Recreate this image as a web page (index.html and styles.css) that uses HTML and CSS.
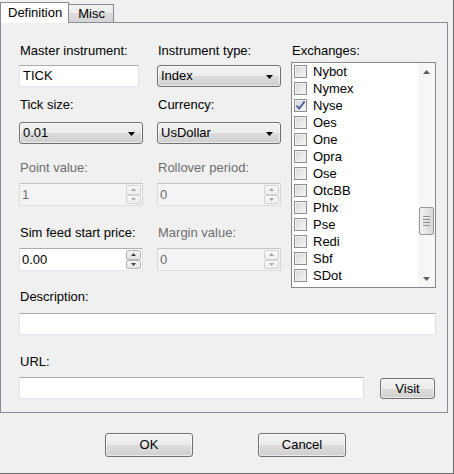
FILE: index.html
```html
<!DOCTYPE html>
<html>
<head>
<meta charset="utf-8">
<link rel="stylesheet" href="styles.css">
</head>
<body>
<div class="window">
  <div class="tabs">
    <div class="tab active">Definition</div>
    <div class="tab">Misc</div>
  </div>
  <div class="panel">
    <div class="top">
      <div class="col c1">
        <div class="lbl">Master instrument:</div>
        <div class="textbox tick">TICK</div>
        <div class="lbl mt10">Tick size:</div>
        <div class="combo mt10"><span>0.01</span><svg class="carrow" width="7" height="4" viewBox="0 0 7 4"><polygon points="0,0 7,0 3.5,4" fill="#000"/></svg></div>
        <div class="lbl dis mt16">Point value:</div>
        <div class="spin disabled mt8"><span class="val">1</span><div class="spinbtns"><div class="sb"><svg width="5" height="3" viewBox="0 0 5 3"><polygon points="0,3 5,3 2.5,0" fill="#a8a8a8"/></svg></div><div class="sb"><svg width="5" height="3" viewBox="0 0 5 3"><polygon points="0,0 5,0 2.5,3" fill="#a8a8a8"/></svg></div></div></div>
        <div class="lbl mt19">Sim feed start price:</div>
        <div class="spin mt8"><span class="val">0.00</span><div class="spinbtns"><div class="sb"><svg width="5" height="3" viewBox="0 0 5 3"><polygon points="0,3 5,3 2.5,0" fill="#3d3d3d"/></svg></div><div class="sb"><svg width="5" height="3" viewBox="0 0 5 3"><polygon points="0,0 5,0 2.5,3" fill="#3d3d3d"/></svg></div></div></div>
      </div>
      <div class="col c2">
        <div class="lbl">Instrument type:</div>
        <div class="combo mt7"><span>Index</span><svg class="carrow" width="7" height="4" viewBox="0 0 7 4"><polygon points="0,0 7,0 3.5,4" fill="#000"/></svg></div>
        <div class="lbl mt10">Currency:</div>
        <div class="combo mt10"><span>UsDollar</span><svg class="carrow" width="7" height="4" viewBox="0 0 7 4"><polygon points="0,0 7,0 3.5,4" fill="#000"/></svg></div>
        <div class="lbl dis mt16">Rollover period:</div>
        <div class="spin disabled mt8"><span class="val">0</span><div class="spinbtns"><div class="sb"><svg width="5" height="3" viewBox="0 0 5 3"><polygon points="0,3 5,3 2.5,0" fill="#a8a8a8"/></svg></div><div class="sb"><svg width="5" height="3" viewBox="0 0 5 3"><polygon points="0,0 5,0 2.5,3" fill="#a8a8a8"/></svg></div></div></div>
        <div class="lbl dis mt19">Margin value:</div>
        <div class="spin disabled mt8"><span class="val">0</span><div class="spinbtns"><div class="sb"><svg width="5" height="3" viewBox="0 0 5 3"><polygon points="0,3 5,3 2.5,0" fill="#a8a8a8"/></svg></div><div class="sb"><svg width="5" height="3" viewBox="0 0 5 3"><polygon points="0,0 5,0 2.5,3" fill="#a8a8a8"/></svg></div></div></div>
      </div>
      <div class="col c3">
        <div class="lbl">Exchanges:</div>
        <div class="listbox">
          <div class="items">
            <div class="item"><span class="cb"></span>Nybot</div>
            <div class="item"><span class="cb"></span>Nymex</div>
            <div class="item"><span class="cb"><svg width="11" height="11" viewBox="0 0 11 11"><path d="M1.5 5.5 L4.2 8.6 L9.6 1.4" fill="none" stroke="#4a5e9e" stroke-width="1.8"/></svg></span>Nyse</div>
            <div class="item"><span class="cb"></span>Oes</div>
            <div class="item"><span class="cb"></span>One</div>
            <div class="item"><span class="cb"></span>Opra</div>
            <div class="item"><span class="cb"></span>Ose</div>
            <div class="item"><span class="cb"></span>OtcBB</div>
            <div class="item"><span class="cb"></span>Phlx</div>
            <div class="item"><span class="cb"></span>Pse</div>
            <div class="item"><span class="cb"></span>Redi</div>
            <div class="item"><span class="cb"></span>Sbf</div>
            <div class="item"><span class="cb"></span>SDot</div>
          </div>
          <div class="scrollbar">
            <div class="sarrow"><svg width="7" height="4" viewBox="0 0 7 4"><polygon points="0,4 7,4 3.5,0" fill="#606060"/></svg></div>
            <div class="track">
              <div class="thumb"><div class="grip"></div><div class="grip"></div><div class="grip"></div><div class="grip"></div></div>
            </div>
            <div class="sarrow"><svg width="7" height="4" viewBox="0 0 7 4"><polygon points="0,0 7,0 3.5,4" fill="#606060"/></svg></div>
          </div>
        </div>
      </div>
    </div>
    <div class="lbl desc">Description:</div>
    <div class="textbox descbox"></div>
    <div class="lbl urll">URL:</div>
    <div class="urlrow">
      <div class="textbox urlbox"></div>
      <div class="btn visit">Visit</div>
    </div>
  </div>
  <div class="buttons">
    <div class="btn big">OK</div>
    <div class="btn big">Cancel</div>
  </div>
</div>
</body>
</html>
```
FILE: styles.css
```css
* { box-sizing: border-box; }
html, body { margin: 0; padding: 0; }
body {
  background: #f0f0f0;
  font-family: "Liberation Sans", Arial, sans-serif;
  font-size: 13px;
  color: #000;
}
.window {
  width: 454px;
  height: 474px;
  background: #f0f0f0;
  border-right: 1px solid #6a6a6a;
  border-bottom: 1px solid #6a6a6a;
  overflow: hidden;
}
.tabs {
  display: flex;
  align-items: flex-end;
  height: 22px;
}
.tab {
  height: 18px;
  padding: 0 8px 0 9px;
  line-height: 18px;
  border: 1px solid #898c95;
  border-bottom: none;
  background: linear-gradient(#f3f3f3, #ebebeb 50%, #dddddd 50%, #d4d4d4);
  font-size: 13px;
}
.tab.active {
  position: relative;
  z-index: 2;
  height: 21px;
  margin-bottom: -1px;
  padding: 0 6px 0 7px;
  line-height: 19px;
  background: #ffffff;
  border-right: 1px solid #898c95;
}
.tab.active + .tab { border-left: none; }
.panel {
  width: 448px;
  height: 391px;
  border: 1px solid #898c95;
  background: #f0f0f0;
  padding: 20px 0 0 18px;
}
.top { display: flex; }
.col { display: flex; flex-direction: column; }
.c1 { width: 138px; }
.c2 { width: 134px; }
.c3 { width: 145px; }
.lbl {
  line-height: 15px;
  height: 15px;
  padding-left: 1px;
  white-space: nowrap;
}
.lbl.dis { color: #6d6d6d; }
.mt7 { margin-top: 7px; }
.mt8 { margin-top: 8px; }
.mt10 { margin-top: 10px; }
.mt16 { margin-top: 16px; }
.mt19 { margin-top: 19px; }
.textbox {
  height: 22px;
  background: #fff;
  border: 1px solid;
  border-color: #abadb3 #dbdfe6 #e3e9ef #e2e3ea;
  padding: 0 3px;
  line-height: 20px;
}
.tick { width: 120px; margin-top: 7px; }
.combo {
  width: 124px;
  height: 22px;
  border: 1px solid #707070;
  border-radius: 3px;
  background: linear-gradient(#f2f2f2, #ebebeb 50%, #dddddd 50%, #cfcfcf);
  box-shadow: inset 0 0 0 1px rgba(255,255,255,0.6);
  display: flex;
  align-items: center;
  justify-content: space-between;
  padding: 0 7px 0 3px;
  line-height: 20px;
}
.carrow { display: block; margin-top: 1px; }
.spin {
  width: 124px;
  height: 23px;
  background: #fff;
  border: 1px solid;
  border-color: #abadb3 #dbdfe6 #e3e9ef #e2e3ea;
  display: flex;
  align-items: stretch;
  justify-content: space-between;
  padding: 1px;
}
.spin .val { line-height: 19px; padding-left: 1px; }
.spin.disabled {
  background: #f4f4f4;
  border-color: #c1c4c9 #d8d8d8 #dedede #d8d8d8;
  color: #6d6d6d;
}
.spinbtns {
  width: 15px;
  display: flex;
  flex-direction: column;
}
.sb {
  flex: 1;
  border: 1px solid #b5b5b5;
  border-radius: 2px;
  background: linear-gradient(#f4f4f4, #e3e3e3);
  display: flex;
  align-items: center;
  justify-content: center;
}
.spin.disabled .sb {
  border-color: #d2d2d2;
  background: linear-gradient(#f8f8f8, #eeeeee);
}
.listbox {
  margin-top: 4px;
  width: 145px;
  height: 226px;
  border: 1px solid #828790;
  background: #fff;
  display: flex;
}
.items {
  flex: 1;
  padding-left: 2px;
}
.item {
  height: 17px;
  display: flex;
  align-items: center;
  line-height: 17px;
  white-space: nowrap;
}
.cb {
  width: 13px;
  height: 13px;
  border: 1px solid #8e8f8f;
  background: linear-gradient(135deg, #d6d6d6, #f6f6f6);
  box-shadow: inset 0 0 0 1px #f0f0f0;
  margin-right: 6px;
  display: flex;
  align-items: center;
  justify-content: center;
}
.scrollbar {
  width: 17px;
  display: flex;
  flex-direction: column;
  background: #f6f6f6;
}
.sarrow {
  height: 17px;
  display: flex;
  align-items: center;
  justify-content: center;
}
.track {
  flex: 1;
  padding-top: 127px;
}
.thumb {
  margin-left: 1px;
  width: 15px;
  height: 28px;
  border: 1px solid #979797;
  border-radius: 2px;
  background: linear-gradient(90deg, #f2f2f2, #e4e4e4 50%, #d6d6d6);
  display: flex;
  flex-direction: column;
  align-items: center;
  justify-content: center;
  gap: 2px;
}
.grip {
  width: 7px;
  height: 1px;
  background: #8d8d8d;
}
.desc { margin-top: 1px; }
.descbox { width: 417px; margin-top: 9px; }
.urll { margin-top: 19px; }
.urlrow {
  display: flex;
  align-items: center;
  margin-top: 8px;
}
.urlbox { width: 345px; }
.btn {
  border: 1px solid #707070;
  border-radius: 3px;
  background: linear-gradient(#f2f2f2, #ebebeb 50%, #dddddd 50%, #cfcfcf);
  box-shadow: inset 0 0 0 1px rgba(255,255,255,0.6);
  text-align: center;
}
.visit {
  width: 55px;
  height: 21px;
  line-height: 19px;
  margin-left: 16px;
}
.buttons {
  display: flex;
  gap: 65px;
  padding: 20px 0 0 105px;
}
.big {
  width: 88px;
  height: 24px;
  line-height: 22px;
}
```
